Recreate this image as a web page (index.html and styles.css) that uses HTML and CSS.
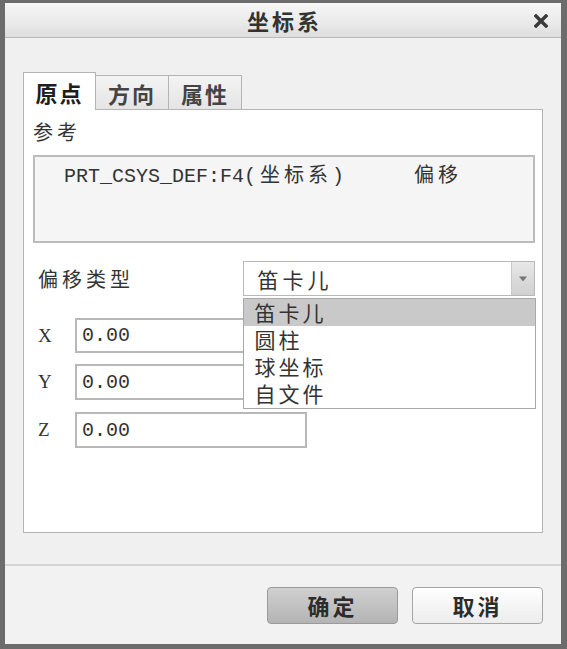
FILE: index.html
```html
<!DOCTYPE html>
<html>
<head>
<meta charset="utf-8">
<link rel="stylesheet" href="styles.css">
</head>
<body>
<div class="dialog">
  <div class="titlebar">
    <span class="title">坐标系</span>
    <svg class="close" width="14" height="14" viewBox="0 0 14 14"><path d="M2 2 L12 12 M12 2 L2 12" stroke="#3a3a3a" stroke-width="3.4" stroke-linecap="square"/></svg>
  </div>
  <div class="main">
    <div class="tabs">
      <div class="tab active">原点</div>
      <div class="tab">方向</div>
      <div class="tab">属性</div>
    </div>
    <div class="panel">
      <div class="label ref-label">参考</div>
      <div class="refbox">
        <span class="mono">PRT_CSYS_DEF:F4(<span class="cjk">坐标系</span>)</span><span class="offset">偏移</span>
      </div>
      <div class="row type-row">
        <div class="label type-label">偏移类型</div>
        <div class="combo-wrap">
          <div class="combo">
            <span class="combo-text">笛卡儿</span>
            <span class="combo-btn"><svg width="10" height="6" viewBox="0 0 10 6"><path d="M1 0.5 L9 0.5 L5 5.5 Z" fill="#777"/></svg></span>
          </div>
          <div class="menu">
            <div class="item sel">笛卡儿</div>
            <div class="item">圆柱</div>
            <div class="item">球坐标</div>
            <div class="item">自文件</div>
          </div>
        </div>
      </div>
      <div class="row coord x-row"><span class="axis">X</span><div class="input">0.00</div></div>
      <div class="row coord y-row"><span class="axis">Y</span><div class="input">0.00</div></div>
      <div class="row coord z-row"><span class="axis">Z</span><div class="input">0.00</div></div>
    </div>
  </div>
  <div class="footer">
    <div class="btn ok">确定</div>
    <div class="btn cancel">取消</div>
  </div>
</div>
</body>
</html>
```
FILE: styles.css
```css
html, body {
  margin: 0;
  padding: 0;
  background: #f0f0f0;
}
.dialog {
  width: 567px;
  height: 649px;
  box-sizing: border-box;
  border-style: solid;
  border-color: #6c6c6c;
  border-width: 3px 6px 5px 5px;
  background: #f0f0f0;
  display: flex;
  flex-direction: column;
  font-family: "Noto Sans CJK SC", "Noto Sans", sans-serif;
  color: #2e2e2e;
}
.titlebar {
  height: 34px;
  border-bottom: 1px solid #b9b9b9;
  background: linear-gradient(#f6f6f6, #ececec 50%, #dedede);
  display: flex;
  align-items: center;
  justify-content: center;
  position: relative;
  flex: none;
}
.title {
  font-size: 22px;
  font-weight: bold;
  letter-spacing: 3px;
  color: #333;
  line-height: 34px;
  margin-left: 3px;
}
.close {
  position: absolute;
  right: 13px;
  top: 11px;
}
.main {
  flex: 1;
  padding: 34px 18px 0 18px;
  display: flex;
  flex-direction: column;
}
.tabs {
  display: flex;
  align-items: flex-end;
  height: 37px;
  position: relative;
  z-index: 1;
}
.tab {
  width: 73px;
  height: 34px;
  box-sizing: border-box;
  border: 1px solid #b4b4b4;
  border-bottom: none;
  border-left: none;
  background: linear-gradient(#f4f4f4, #e4e4e4);
  font-size: 22px;
  font-weight: bold;
  letter-spacing: 2px;
  color: #444;
  text-align: center;
  line-height: 34px;
}
.tab.active {
  height: 38px;
  margin-bottom: -1px;
  border-left: 1px solid #b4b4b4;
  background: #fff;
  color: #1e1e1e;
  line-height: 38px;
}
.panel {
  height: 424px;
  box-sizing: border-box;
  border: 1px solid #b4b4b4;
  background: #fff;
  padding: 10px 7px 0 9px;
}
.label {
  font-size: 20px;
  letter-spacing: 4px;
  line-height: 24px;
  color: #333;
}
.refbox {
  margin-top: 11px;
  height: 88px;
  box-sizing: border-box;
  border: 2px solid #bcbcbc;
  background: #f5f5f5;
  padding: 4px 0 0 29px;
  display: block;
  line-height: 26px;
}
.mono {
  font-family: "Liberation Mono", monospace;
  font-size: 20px;
  color: #333;
}
.mono .cjk {
  font-family: "Noto Sans CJK SC", sans-serif;
  font-size: 20px;
  letter-spacing: 4px;
  padding-left: 4px;
}
.offset {
  margin-left: 70px;
  font-size: 20px;
  letter-spacing: 4px;
  color: #333;
}
.row {
  display: flex;
  align-items: center;
}
.type-row {
  margin-top: 18px;
  padding-left: 5px;
  height: 35px;
}
.type-label {
  width: 205px;
}
.combo-wrap {
  position: relative;
  width: 293px;
}
.combo {
  height: 35px;
  box-sizing: border-box;
  border: 1px solid #b8b8b8;
  background: #fff;
  display: flex;
  align-items: center;
}
.combo-text {
  flex: 1;
  padding-left: 14px;
  font-size: 21px;
  letter-spacing: 4px;
  color: #333;
}
.combo-btn {
  width: 22px;
  height: 33px;
  background: linear-gradient(#e8e8e8, #d0d0d0);
  border-left: 1px solid #c8c8c8;
  display: flex;
  align-items: center;
  justify-content: center;
}
.menu {
  position: absolute;
  left: 0;
  top: 37px;
  width: 293px;
  height: 111px;
  box-sizing: border-box;
  border: 1px solid #a8a8a8;
  background: #fff;
  z-index: 5;
}
.item {
  height: 27px;
  line-height: 27px;
  padding-left: 11px;
  font-size: 21px;
  letter-spacing: 3px;
  color: #333;
}
.item.sel {
  background: #c9c9c9;
}
.coord {
  padding-left: 5px;
  height: 35px;
}
.x-row { margin-top: 22px; }
.y-row { margin-top: 11px; height: 36px; }
.z-row { margin-top: 12px; height: 36px; }
.axis {
  width: 37px;
  font-family: "Liberation Serif", serif;
  font-size: 19px;
  color: #333;
}
.input {
  width: 232px;
  height: 100%;
  box-sizing: border-box;
  border: 2px solid #b8b8b8;
  background: #fff;
  padding-left: 5px;
  font-family: "Liberation Mono", monospace;
  font-size: 20px;
  color: #333;
  display: flex;
  align-items: center;
}
.footer {
  flex: none;
  height: 80px;
  border-top: 2px solid #d4d4d4;
  box-sizing: border-box;
  display: flex;
  justify-content: flex-end;
  align-items: flex-start;
  gap: 14px;
  padding: 21px 18px 0 0;
  background: #f2f2f2;
}
.btn {
  width: 131px;
  height: 37px;
  box-sizing: border-box;
  border-radius: 4px;
  font-size: 22px;
  font-weight: bold;
  letter-spacing: 3px;
  text-align: center;
  line-height: 35px;
  color: #2c2c2c;
}
.btn.ok {
  border: 1px solid #9a9a9a;
  background: linear-gradient(#d0d0d0, #b4b4b4);
}
.btn.cancel {
  border: 1px solid #a6a6a6;
  background: linear-gradient(#ffffff, #ececec);
}
```
